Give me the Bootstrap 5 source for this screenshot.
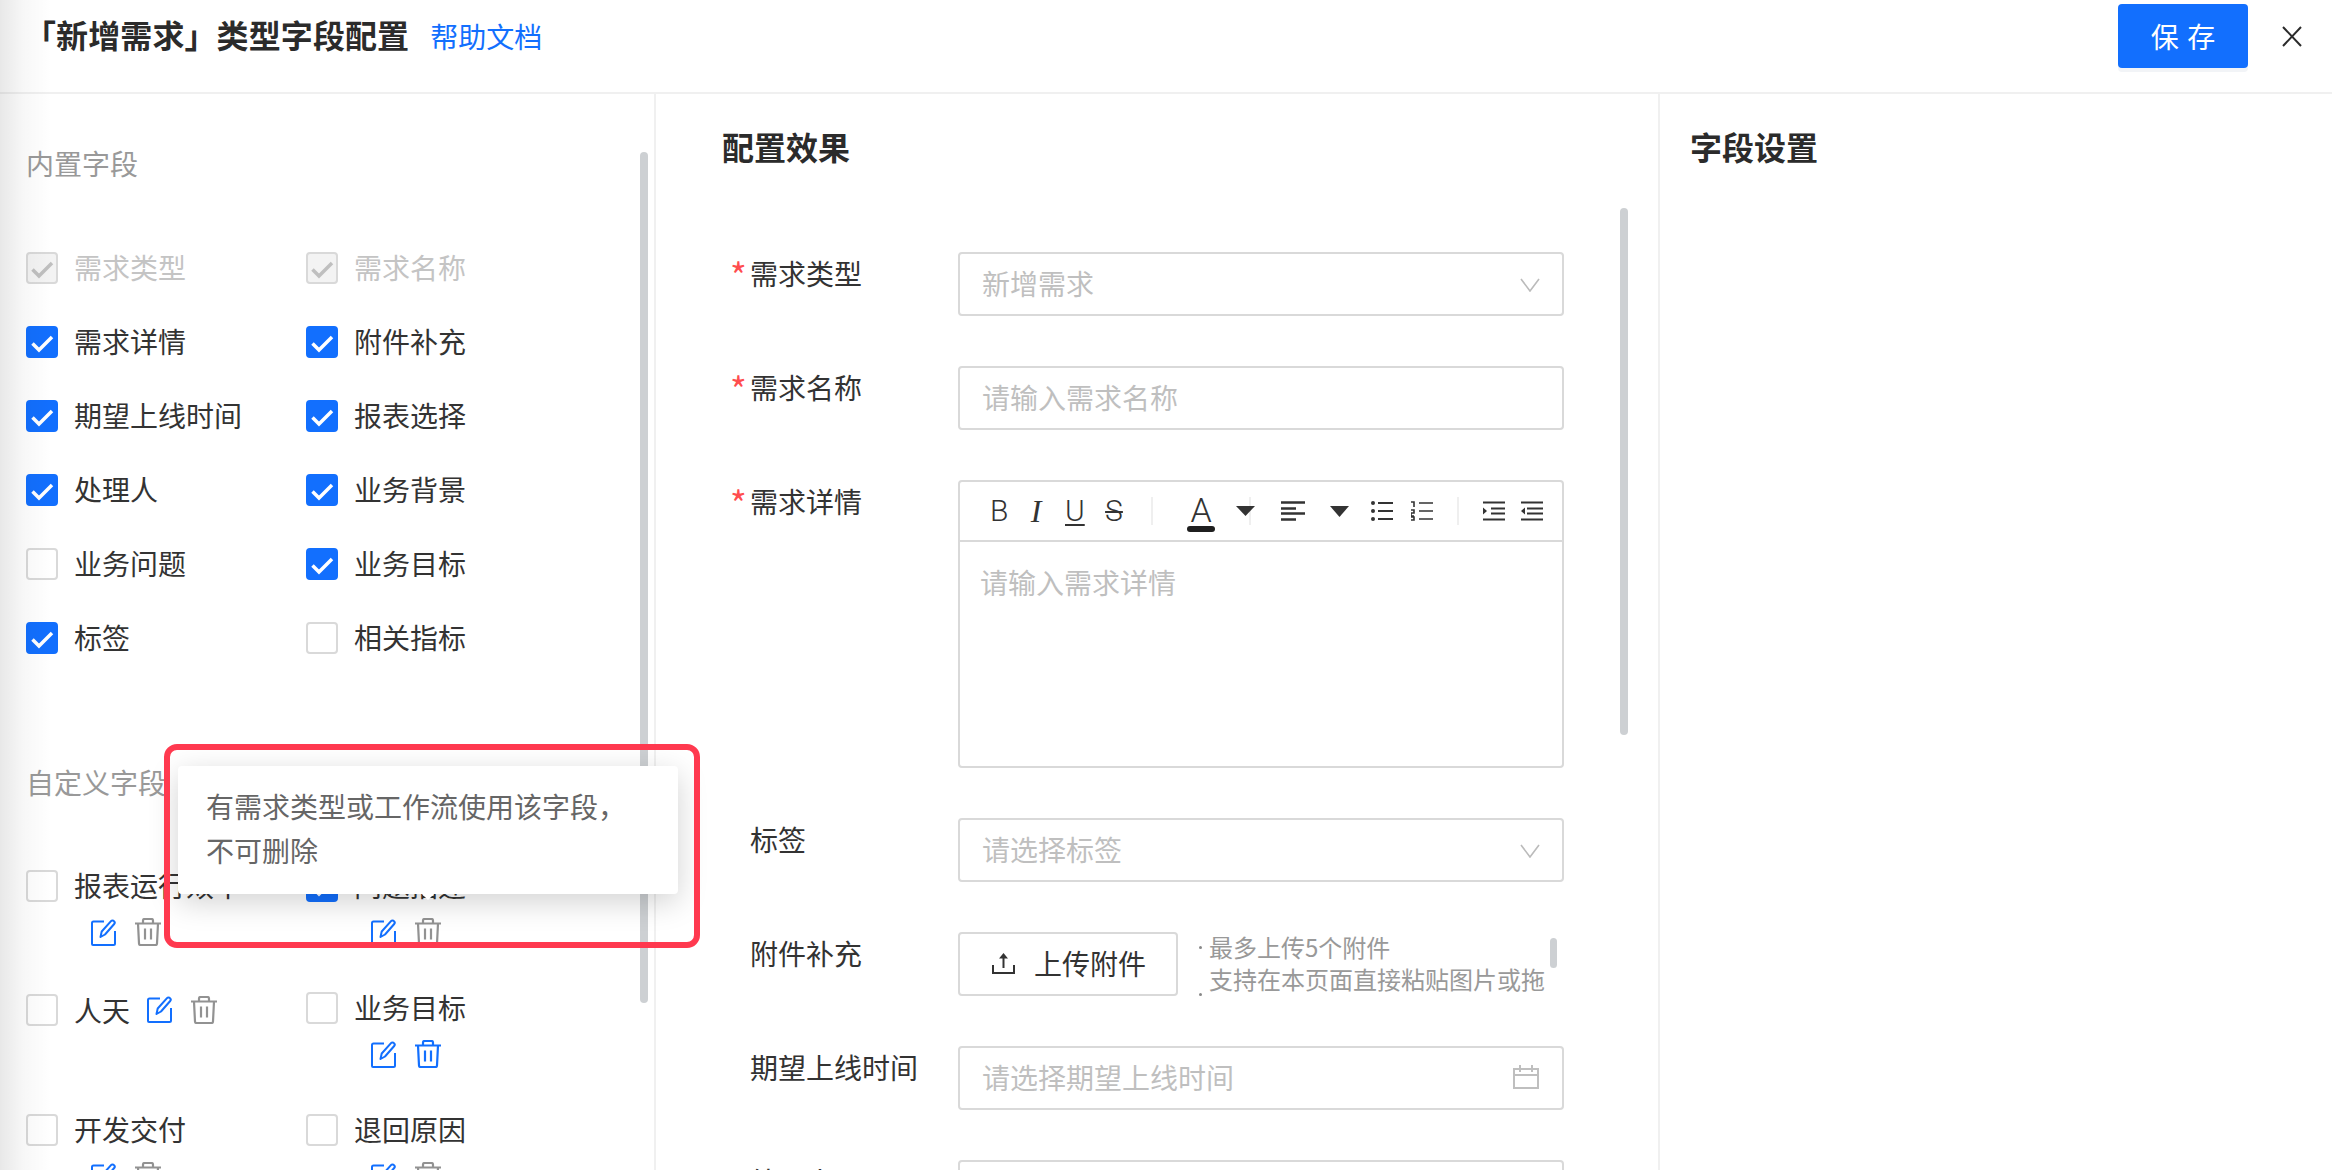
<!DOCTYPE html>
<html lang="zh-CN">
<head>
<meta charset="utf-8">
<title>字段配置</title>
<link href="https://cdn.jsdelivr.net/npm/bootstrap@5.3.0/dist/css/bootstrap.min.css" rel="stylesheet">
<style>
html,body{height:100%;overflow:hidden}
body{font-family:"Noto Sans CJK SC","Noto Sans",sans-serif;font-size:28px;line-height:42px;color:#333;background:#fff}
.pg{position:relative;width:2332px;height:1170px;overflow:hidden}
.edge{position:absolute;left:0;top:0;bottom:0;width:52px;background:linear-gradient(90deg,rgba(0,0,0,.09),rgba(0,0,0,.03) 45%,rgba(0,0,0,0));pointer-events:none}
.hdr{height:94px;border-bottom:2px solid #f0f0f0;padding:4px 30px 0 24px}
.ttl{font-size:32px;font-weight:700;line-height:48px;padding-top:6px;color:#2b2b2b;letter-spacing:.1px}
.hlp{font-size:28px;margin-left:21px;padding-top:8px;color:#126ffe;text-decoration:none;line-height:48px}
.savebtn{width:130px;height:64px;padding:0;font-size:28px;line-height:1;background:#126ffe;border:0;border-radius:4px;color:#fff;box-shadow:0 4px 0 #f2f4f7;word-spacing:2px}
.closer{margin:22px 0 0 34px;display:block}
.main{height:1076px}
.lp{width:656px;border-right:2px solid #f0f0f0;padding:49px 0 0 26px;position:relative;flex:none}
.mp{width:1004px;border-right:2px solid #f0f0f0;padding:28px 0 0 66px;position:relative;flex:none}
.rp{padding:28px 0 0 30px}
.sect{color:#999;height:42px;margin-top:-1px;margin-bottom:63px;padding-bottom:1px}
.sect2{margin-top:102px;margin-bottom:62px;padding-bottom:0}
.fgrid{display:grid;grid-template-columns:280px 280px;row-gap:32px}
.fgrid2{row-gap:41px}
.fld{display:flex;align-items:center;gap:16px;height:42px;margin:0;white-space:nowrap;padding-bottom:3px}
.fld2{padding-top:4px;height:44px;margin-bottom:-2px}
.fld2 .fld{padding-bottom:0;height:40px}
.fld .form-check-input{width:32px;height:32px;margin:3px 0 0;flex:none;border:2px solid #d9d9d9;border-radius:4px;background-color:#fff;opacity:1}
.fld2 .fld .form-check-input{margin-top:0}
.fld .form-check-input:checked{background-color:#126ffe;border-color:#126ffe;background-size:32px 32px;background-position:-2px -2px;background-image:url("data:image/svg+xml,%3Csvg xmlns='http://www.w3.org/2000/svg' viewBox='0 0 32 32'%3E%3Cpath d='M6.500 17.500l6.500 6.500L26 11' fill='none' stroke='%23fff' stroke-width='3.500'/%3E%3C/svg%3E")}
.fld .form-check-input:disabled{opacity:1;background-color:#f3f3f3;border-color:#d9d9d9;background-image:url("data:image/svg+xml,%3Csvg xmlns='http://www.w3.org/2000/svg' viewBox='0 0 32 32'%3E%3Cpath d='M6.500 17.500l6.500 6.500L26 11' fill='none' stroke='%23bfbfbf' stroke-width='3.500'/%3E%3C/svg%3E")}
.off{color:#c4c4c4}
.acts{display:flex;gap:18px;margin:11px 0 0 65px;height:28px;align-items:center}
.inl{display:flex;gap:18px;align-items:center;margin-left:1px}
.ic-b{color:#126ffe}
.ic-g{color:#929292}
.vbar{position:absolute;background:#cdd0d3;border-radius:4px}
.vb1{left:640px;top:58px;width:8px;height:851px}
.vb2{left:964px;top:114px;width:8px;height:527px}
.hd{font-size:32px;font-weight:700;line-height:48px;color:#2b2b2b}
.frm{margin-top:82px;width:842px}
.frow{display:flex;margin-bottom:50px}
.lbl{width:236px;flex:none;display:flex;height:43px}
.star{width:20px;margin-left:8px;color:#ff4d4f;flex:none;font-size:36px;line-height:44px}
.ctl{width:606px;height:64px;border:2px solid #d9d9d9;border-radius:4px;padding:0 21px 2px 22px;font-size:28px;line-height:42px;color:#bfbfbf;background:#fff;display:flex;align-items:center;justify-content:space-between;box-shadow:none}
.ctl::placeholder{color:#bfbfbf}
.chev{margin:4px 1px 0 0}
.cal{margin-right:2px}
.ed{width:606px;height:288px;border:2px solid #d9d9d9;border-radius:4px;flex:none}
.tb{height:60px;border-bottom:2px solid #d9d9d9;display:flex;align-items:center;padding-left:30px;color:#333;position:relative}
.tb svg{display:block;flex:none}
.tk{font-family:Roboto,"Liberation Sans",sans-serif;font-weight:300;font-size:30px;line-height:40px;display:block;text-align:center;flex:none}
.k-b{width:15px}
.k-i{width:12px;margin-left:25px;font-family:"Liberation Serif",serif;font-style:italic;font-weight:400;font-size:32px}
.k-u{width:18px;margin-left:23px;text-decoration:underline;text-underline-offset:3px;text-decoration-thickness:2px}
.k-s{width:22px;margin-left:20px;text-decoration:line-through;text-decoration-thickness:2px}
.k-sep{width:2px;height:28px;background:#efefef;margin-left:26px}
.k-a{margin-left:34px;position:relative;width:28px;padding-bottom:3px;font-size:34px;line-height:38px}
.k-a::after{content:"";position:absolute;left:0;right:0;bottom:0;height:6px;border-radius:3px;background:#1f1f1f}
.m1{margin-left:21px}.m2{margin-left:25px}.m3{margin-left:25px}.m4{margin-left:22px}.m5{margin-left:18px}.m6{margin-left:24px}.m7{margin-left:24px}.m8{margin-left:16px}
.edph{padding:19px 20px;color:#bfbfbf;font-size:28px}
.upl{width:220px;height:64px;border:2px solid #d9d9d9;border-radius:4px;background:#fff;color:#333;font-size:28px;padding:0 0 2px 2px;gap:19px;flex:none;display:flex;align-items:center;justify-content:center}
.hint{margin:-1px 0 0;padding:0 0 0 31px;list-style:none;font-size:24px;line-height:32px;color:#999;height:65px;overflow:hidden;position:relative;width:385px;white-space:nowrap}
.hint li{position:relative}
.hint li:first-child::before{content:"";position:absolute;left:-10px;top:15px;width:3px;height:3px;border-radius:50%;background:#888}
.hint li:nth-child(2)::after{content:"";position:absolute;left:-10px;top:30px;width:3px;height:3px;border-radius:50%;background:#888}
.hb{position:absolute!important;left:372px;top:7px;width:7px;height:30px;border-radius:4px;background:#cdd0d3}
.tipbox{position:absolute;left:178px;top:766px;width:500px;height:128px;background:#fff;border-radius:4px;padding:18px 28px;color:#666;box-shadow:0 8px 30px rgba(0,0,0,.18);line-height:44px}
.tipbox::after{content:"";position:absolute;left:245px;bottom:-4px;width:10px;height:10px;background:#fff;transform:rotate(45deg)}
.redbox{position:absolute;left:164px;top:744px;width:536px;height:204px;border:6.5px solid #ff394f;border-radius:13px;pointer-events:none}
</style>
</head>
<body>
<svg width="0" height="0" class="d-none">
<symbol id="i-edit" viewBox="0 0 26 27"><path d="M13 2.500H2.500A1.500 1.500 0 0 0 1 4v21a1 1 0 0 0 1 1h20.500a1.500 1.500 0 0 0 1.500-1.500V12" fill="none" stroke="currentColor" stroke-width="2"/><path d="M9.500 18l1.200-5.500L20 2.200a2 2 0 0 1 3 0 2 2 0 0 1 .2 2.800L14 15.500z" fill="none" stroke="currentColor" stroke-width="2" stroke-linejoin="round"/></symbol>
<symbol id="i-del" viewBox="0 0 26 28"><path d="M0 5.500H26M8 5.500V2.500A1.500 1.500 0 0 1 9.500 1h7A1.500 1.500 0 0 1 18 2.500V5.500M3 5.500l1 20A1.500 1.500 0 0 0 5.500 27h15a1.500 1.500 0 0 0 1.500-1.500l1-20M10 10.500v11M16 10.500v11" fill="none" stroke="currentColor" stroke-width="2.200"/></symbol>
</svg>
<div class="pg">
  <header class="hdr d-flex align-items-start">
    <div class="ttl">「新增需求」类型字段配置</div>
    <a class="hlp" href="#">帮助文档</a>
    <button type="button" class="btn savebtn ms-auto">保 存</button>
    <svg class="closer" width="20" height="21" viewBox="0 0 20 21"><path d="M1 1l18 19M19 1L1 20" stroke="#2b2b2b" stroke-width="2" fill="none"/></svg>
  </header>
  <div class="main d-flex">
    <aside class="lp">
      <div class="sect">内置字段</div>
      <div class="fgrid">
        <label class="fld off"><input class="form-check-input" type="checkbox" checked disabled>需求类型</label>
        <label class="fld off"><input class="form-check-input" type="checkbox" checked disabled>需求名称</label>
        <label class="fld"><input class="form-check-input" type="checkbox" checked>需求详情</label>
        <label class="fld"><input class="form-check-input" type="checkbox" checked>附件补充</label>
        <label class="fld"><input class="form-check-input" type="checkbox" checked>期望上线时间</label>
        <label class="fld"><input class="form-check-input" type="checkbox" checked>报表选择</label>
        <label class="fld"><input class="form-check-input" type="checkbox" checked>处理人</label>
        <label class="fld"><input class="form-check-input" type="checkbox" checked>业务背景</label>
        <label class="fld"><input class="form-check-input" type="checkbox">业务问题</label>
        <label class="fld"><input class="form-check-input" type="checkbox" checked>业务目标</label>
        <label class="fld"><input class="form-check-input" type="checkbox" checked>标签</label>
        <label class="fld"><input class="form-check-input" type="checkbox">相关指标</label>
      </div>
      <div class="sect sect2">自定义字段</div>
      <div class="fgrid fgrid2">
        <div>
          <label class="fld"><input class="form-check-input" type="checkbox">报表运行效率</label>
          <div class="acts"><svg class="ic-b" width="26" height="27"><use href="#i-edit"/></svg><svg class="ic-g" width="26" height="28"><use href="#i-del"/></svg></div>
        </div>
        <div>
          <label class="fld"><input class="form-check-input" type="checkbox" checked>问题描述</label>
          <div class="acts"><svg class="ic-b" width="26" height="27"><use href="#i-edit"/></svg><svg class="ic-g" width="26" height="28"><use href="#i-del"/></svg></div>
        </div>
        <div class="fld fld2">
          <label class="d-flex align-items-center fld m-0"><input class="form-check-input" type="checkbox">人天</label>
          <div class="inl"><svg class="ic-b" width="26" height="27"><use href="#i-edit"/></svg><svg class="ic-g" width="26" height="28"><use href="#i-del"/></svg></div>
        </div>
        <div>
          <label class="fld"><input class="form-check-input" type="checkbox">业务目标</label>
          <div class="acts"><svg class="ic-b" width="26" height="27"><use href="#i-edit"/></svg><svg class="ic-b" width="26" height="28"><use href="#i-del"/></svg></div>
        </div>
        <div>
          <label class="fld"><input class="form-check-input" type="checkbox">开发交付</label>
          <div class="acts"><svg class="ic-b" width="26" height="27"><use href="#i-edit"/></svg><svg class="ic-g" width="26" height="28"><use href="#i-del"/></svg></div>
        </div>
        <div>
          <label class="fld"><input class="form-check-input" type="checkbox">退回原因</label>
          <div class="acts"><svg class="ic-b" width="26" height="27"><use href="#i-edit"/></svg><svg class="ic-g" width="26" height="28"><use href="#i-del"/></svg></div>
        </div>
      </div>
      <div class="vbar vb1"></div>
    </aside>
    <section class="mp">
      <div class="hd">配置效果</div>
      <form class="frm">
        <div class="frow">
          <div class="lbl"><span class="star">*</span>需求类型</div>
          <div class="ctl"><span>新增需求</span><svg class="chev" width="20" height="14" viewBox="0 0 20 14"><path d="M1 1l9 12 9-12" fill="none" stroke="#bbb" stroke-width="1.600"/></svg></div>
        </div>
        <div class="frow">
          <div class="lbl"><span class="star">*</span>需求名称</div>
          <input class="form-control ctl" type="text" placeholder="请输入需求名称">
        </div>
        <div class="frow">
          <div class="lbl"><span class="star">*</span>需求详情</div>
          <div class="ed">
            <div class="tb">
              <span class="tk k-b">B</span><span class="tk k-i">I</span><span class="tk k-u">U</span><span class="tk k-s">S</span>
              <span class="k-sep"></span>
              <span class="tk k-a">A</span>
              <svg class="m1" width="20" height="28" viewBox="0 0 20 28"><path d="M14 0v28" stroke="#efefef" stroke-width="2"/><path d="M0 9h19l-9.500 10z" fill="#333"/></svg>
              <svg class="m2" width="24" height="20" viewBox="0 0 24 20"><path d="M0 1.500h24M0 7.500h15M0 12.500h24M0 18.500h15" stroke="#333" stroke-width="2.400"/></svg>
              <svg class="m3" width="19" height="11" viewBox="0 0 19 11"><path d="M0 0h19l-9.500 11z" fill="#333"/></svg>
              <svg class="m4" width="22" height="20" viewBox="0 0 22 20"><circle cx="2" cy="2" r="2" fill="#333"/><circle cx="2" cy="10" r="2" fill="#333"/><circle cx="2" cy="18" r="2" fill="#333"/><path d="M7 2h15M7 10h15M7 18h15" stroke="#333" stroke-width="2.200"/></svg>
              <svg class="m5" width="22" height="20" viewBox="0 0 22 20"><path d="M0 1h3v5M0 9h3v3H0v3h3M0 16h3v3H0M8 2h14M8 10h14M8 18h14" stroke="#333" stroke-width="1.600" fill="none"/></svg>
              <span class="k-sep m6"></span>
              <svg class="m7" width="22" height="20" viewBox="0 0 22 20"><path d="M0 1.500h22M8 7.500h14M8 12.500h14M0 18.500h22" stroke="#333" stroke-width="2.200"/><path d="M0 6.500l4 3.500-4 3.500z" fill="#333"/></svg>
              <svg class="m8" width="22" height="20" viewBox="0 0 22 20"><path d="M0 1.500h22M6 7.500h16M6 12.500h16M0 18.500h22" stroke="#333" stroke-width="2.200"/><path d="M4 6.500L0 10l4 3.500z" fill="#333"/></svg>
            </div>
            <div class="edph">请输入需求详情</div>
          </div>
        </div>
        <div class="frow">
          <div class="lbl"><span class="star"></span>标签</div>
          <div class="ctl"><span>请选择标签</span><svg class="chev" width="20" height="14" viewBox="0 0 20 14"><path d="M1 1l9 12 9-12" fill="none" stroke="#bbb" stroke-width="1.600"/></svg></div>
        </div>
        <div class="frow">
          <div class="lbl"><span class="star"></span>附件补充</div>
          <button type="button" class="btn upl"><svg width="23" height="22" viewBox="0 0 23 22"><path d="M1 13v8h21v-8" fill="none" stroke="#333" stroke-width="2"/><path d="M11.500 16V3" stroke="#333" stroke-width="2"/><path d="M7 6.500L11.500 1 16 6.500z" fill="#333"/></svg>上传附件</button>
          <ul class="hint">
            <li>最多上传5个附件</li>
            <li>支持在本页面直接粘贴图片或拖</li>
            <li class="hb"></li>
          </ul>
        </div>
        <div class="frow">
          <div class="lbl"><span class="star"></span>期望上线时间</div>
          <div class="ctl"><span>请选择期望上线时间</span><svg class="cal" width="26" height="24" viewBox="0 0 26 24"><path d="M1 4h24v19H1zM1 10h24M7 0v7M19 0v7" fill="none" stroke="#bfbfbf" stroke-width="2"/></svg></div>
        </div>
        <div class="frow">
          <div class="lbl"><span class="star"></span>处理人</div>
          <div class="ctl"></div>
        </div>
      </form>
      <div class="vbar vb2"></div>
    </section>
    <section class="rp">
      <div class="hd">字段设置</div>
    </section>
  </div>
  <div class="edge"></div>
  <div class="tipbox">有需求类型或工作流使用该字段，<br>不可删除</div>
  <div class="redbox"></div>
</div>
<script src="https://cdn.jsdelivr.net/npm/bootstrap@5.3.0/dist/js/bootstrap.bundle.min.js"></script>
</body>
</html>
